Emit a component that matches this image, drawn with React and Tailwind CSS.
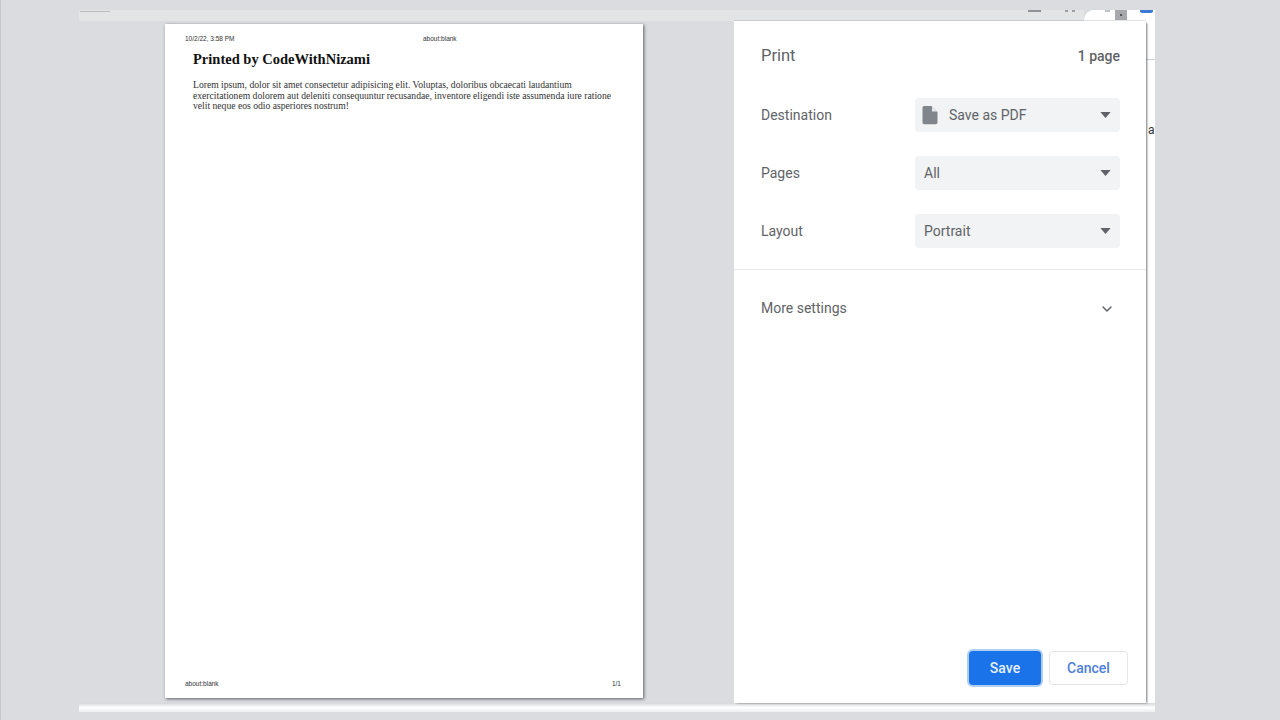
import React from 'react';
import { ChevronDown } from 'lucide-react';

const FileIcon = () => (
  <svg viewBox="0 0 16 20" className="w-[16px] h-[20px] shrink-0 -ml-[2px]">
    <path d="M2 1h7.500L15.500 7v10.500a1.800 1.800 0 0 1-1.800 1.800H2.300a1.800 1.800 0 0 1-1.800-1.800V2.800A1.800 1.800 0 0 1 2 1z" fill="#80868b" />
    <path d="M10 1.500v5h5z" fill="#e8eaed" />
  </svg>
);

const Field = ({ label, value, icon }) => (
  <div className="flex items-center justify-between h-[34px] mb-[24px]">
    <span className="text-[14px] text-[#5f6368]">{label}</span>
    <div className="w-[205px] h-[34px] bg-[#f1f3f4] rounded-[4px] flex items-center pl-[9px] pr-[8px]">
      {icon}
      <span className={`text-[14px] text-[#5f6368] flex-1 ${icon ? 'ml-[11px]' : ''}`}>{value}</span>
      <svg viewBox="0 0 12 7" className="w-[11px] h-[6px] mr-[1px]">
        <path d="M0 0h12L6 7z" fill="#5f6368" />
      </svg>
    </div>
  </div>
);

const SheetPreview = () => (
  <div className="w-[478px] h-[674px] bg-white shadow-[1px_1px_3px_rgba(60,64,67,0.8)] flex flex-col justify-between pl-[20px] pr-[22px] pt-[11px] pb-[11px] font-['Liberation_Serif',serif]">
    <div>
      <div className="flex items-center h-[7px] text-[6.500px] leading-[7px] text-[#333] font-['Liberation_Sans',sans-serif]">
        <span className="w-[238px]">10/2/22, 3:58 PM</span>
        <span>about:blank</span>
      </div>
      <div className="pl-[8px] pr-[6px]">
        <h1 className="mt-[8px] text-[14.500px] leading-[18px] font-bold text-[#111]">Printed by CodeWithNizami</h1>
        <p className="mt-[12px] text-[9.630px] leading-[10.500px] text-[#333]">
          Lorem ipsum, dolor sit amet consectetur adipisicing elit. Voluptas, doloribus obcaecati laudantium
          exercitationem dolorem aut deleniti consequuntur recusandae, inventore eligendi iste assumenda iure ratione
          velit neque eos odio asperiores nostrum!
        </p>
      </div>
    </div>
    <div className="flex items-center justify-between h-[7px] text-[6.500px] leading-[7px] text-[#333] font-['Liberation_Sans',sans-serif]">
      <span>about:blank</span>
      <span>1/1</span>
    </div>
  </div>
);

export default function App() {
  return (
    <div className="w-[1280px] h-[720px] overflow-hidden bg-[#dadce0] border-l border-[#c6c8cc] flex font-['Roboto',sans-serif]">
      <div className="w-[78px] shrink-0" />
      <div className="w-[1076px] h-[712px] flex flex-col">
        {/* what is left of the browser toolbar behind the dialog */}
        <div className="h-[10px] shrink-0" />
        <div className="h-[11px] shrink-0 flex items-start">
          <div className="w-[1005px] h-full bg-[#e2e4e6] flex items-start">
            <div className="w-[30px] h-px bg-[#b9bbbe] mt-px ml-[1px]" />
            <div className="w-[13px] h-[2px] bg-[#8f9296] ml-[918px]" />
            <div className="w-[3px] h-[2px] bg-[#9aa0a6] ml-[24px]" />
            <div className="w-[3px] h-[2px] bg-[#9aa0a6] ml-[4px]" />
          </div>
          <div className="w-[71px] h-full bg-white rounded-tl-[10px] flex items-start">
            <div className="w-[5px] h-[2px] bg-[#c0c2c5] ml-[21px]" />
            <div className="w-[12px] h-[10px] bg-[#a6a8ac] ml-[5px] flex items-center justify-center">
              <div className="w-[2px] h-[2px] bg-[#555]" />
            </div>
            <div className="w-[13px] h-[3px] bg-[#3b78d8] rounded-b-[2px] ml-[13px]" />
          </div>
        </div>

        <div className="flex-1 flex min-h-0">
          <div className="w-[655px] shrink-0 pl-[86px] pt-[3px] bg-[#dadce0]">
            <SheetPreview />
          </div>

          <div className="w-[412px] shrink-0 bg-white shadow-[2px_1px_2px_-1px_rgba(60,64,67,0.7),0_-1px_0_rgba(60,64,67,0.15)] flex flex-col z-10">
            <div className="flex items-center justify-between h-[68px] pt-[2px] pl-[27px] pr-[26px]">
              <span className="text-[16.500px] text-[#5f6368]">Print</span>
              <span className="text-[14px] font-medium text-[#5f6368]">1 page</span>
            </div>
            <div className="pl-[27px] pr-[26px] pt-[9px]">
              <Field label="Destination" value="Save as PDF" icon={<FileIcon />} />
              <Field label="Pages" value="All" />
              <Field label="Layout" value="Portrait" />
            </div>
            <div className="h-px bg-[#e8eaed] -mt-[3px]" />
            <div className="flex items-center justify-between h-[77px] pl-[27px] pr-[31px]">
              <span className="text-[14px] text-[#5f6368]">More settings</span>
              <ChevronDown size={16} strokeWidth={2.200} className="text-[#5f6368]" />
            </div>
            <div className="flex-1" />
            <div className="flex justify-end gap-[8px] pr-[18px] pb-[18px]">
              <button className="w-[72px] h-[34px] rounded-[4px] bg-[#1a73e8] text-[#e8f0fe] text-[14px] font-medium shadow-[0_0_0_2px_rgba(26,115,232,0.35)]">Save</button>
              <button className="w-[79px] h-[34px] rounded-[4px] bg-white border border-[#e3e5e8] text-[#4f7fd8] text-[14px] font-medium">Cancel</button>
            </div>
          </div>

          {/* page behind the dialog, mostly covered */}
          <div className="flex-1 bg-white overflow-hidden flex flex-col">
            <div className="h-[39px] shrink-0 border-b border-[#cfd1d4]" />
            <div className="pt-[63px] pl-[2px] text-[12px] leading-[14px] text-[#333]">a</div>
          </div>
        </div>

        <div className="h-[9px] shrink-0 bg-gradient-to-b from-[#d4d6d9] via-white to-[#eceef0]" />
      </div>
    </div>
  );
}
